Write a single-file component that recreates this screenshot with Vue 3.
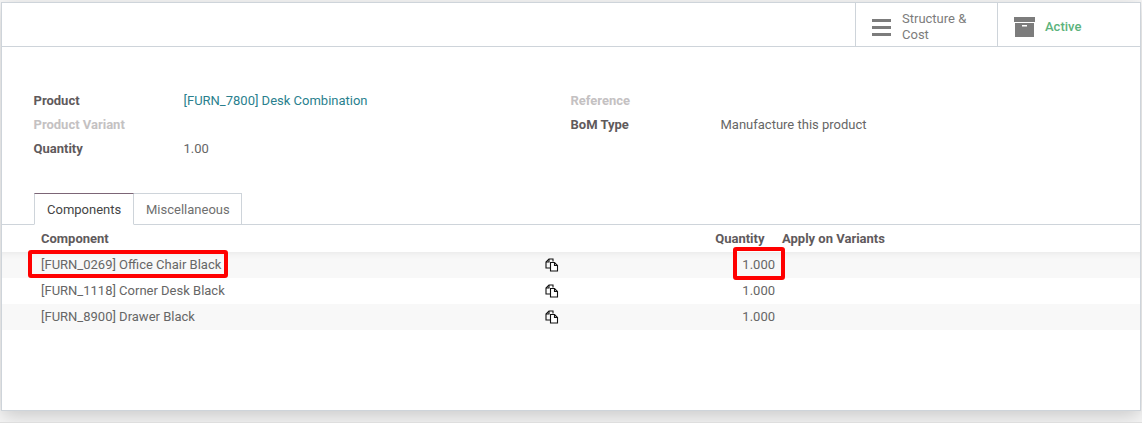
<script setup>
const leftFields = [
  { label: 'Product', value: '[FURN_7800] Desk Combination', link: true },
  { label: 'Product Variant', value: '', muted: true },
  { label: 'Quantity', value: '1.00' },
]
const rightFields = [
  { label: 'Reference', value: '', muted: true },
  { label: 'BoM Type', value: 'Manufacture this product' },
]
const rows = [
  { name: '[FURN_0269] Office Chair Black', qty: '1.000' },
  { name: '[FURN_1118] Corner Desk Black', qty: '1.000' },
  { name: '[FURN_8900] Drawer Black', qty: '1.000' },
]
</script>

<template>
  <div class="page">
    <div class="backdrop">
      <div class="sheet">
        <div class="topbar">
          <div class="stat stat-structure">
            <svg class="icon-bars" width="20" height="17" viewBox="0 0 20 17">
              <rect x="0" y="0" width="19" height="3" fill="#7c7c7c" />
              <rect x="0" y="7" width="19" height="3" fill="#7c7c7c" />
              <rect x="0" y="14" width="19" height="3" fill="#7c7c7c" />
            </svg>
            <span class="stat-text">Structure &amp;<br />Cost</span>
          </div>
          <div class="stat stat-active">
            <svg class="icon-box" width="21" height="20" viewBox="0 0 21 20">
              <rect x="0" y="0" width="21" height="5" fill="#7c7c7c" />
              <rect x="1" y="6" width="19" height="14" fill="#7c7c7c" />
              <rect x="8" y="8" width="5" height="1.5" fill="#fff" />
            </svg>
            <span class="active-text">Active</span>
          </div>
        </div>

        <div class="fields">
          <div class="field-col">
            <div v-for="f in leftFields" :key="f.label" class="field">
              <span class="label" :class="{ muted: f.muted }">{{ f.label }}</span>
              <span class="value" :class="{ link: f.link }">{{ f.value }}</span>
            </div>
          </div>
          <div class="field-col">
            <div v-for="f in rightFields" :key="f.label" class="field">
              <span class="label" :class="{ muted: f.muted }">{{ f.label }}</span>
              <span class="value">{{ f.value }}</span>
            </div>
          </div>
        </div>

        <div class="tabs">
          <div class="tab tab-active">Components</div>
          <div class="tab tab-misc">Miscellaneous</div>
        </div>

        <div class="table">
          <div class="row head">
            <span class="c-name">Component</span>
            <span class="c-icon"></span>
            <span class="c-qty head-qty">Quantity</span>
            <span class="c-var">Apply on Variants</span>
          </div>
          <div v-for="r in rows" :key="r.name" class="row body-row">
            <span class="c-name">{{ r.name }}</span>
            <span class="c-icon">
              <svg width="14" height="14" viewBox="0 0 14 14" fill="none" stroke="#111" stroke-width="1.1">
                <path d="M8 3.5V1H4L1 4v6h4" />
                <path d="M4 1v3H1" />
                <path d="M5.5 4.5h4l3 3v5.5h-7z" fill="#fff" />
                <path d="M9.5 4.5v3h3" />
              </svg>
            </span>
            <span class="c-qty">{{ r.qty }}</span>
            <span class="c-var"></span>
          </div>
        </div>

        <div class="mark mark-name"></div>
        <div class="mark mark-qty"></div>
      </div>
    </div>
  </div>
</template>

<style scoped>
.page {
  width: 1142px;
  height: 440px;
  background: #fff;
  font-family: Roboto, "Liberation Sans", sans-serif;
  font-size: 13px;
  color: #666;
  overflow: hidden;
}
.backdrop {
  height: 423px;
  box-sizing: border-box;
  padding: 2px 0 0 1px;
  background: #f8f8f8;
  border-bottom: 1px solid #dedede;
  overflow: hidden;
}
.sheet {
  position: relative;
  width: 1140px;
  height: 409px;
  box-sizing: border-box;
  background: #fff;
  border: 1px solid #ced4da;
  box-shadow: 0 5px 20px rgba(0, 0, 0, 0.2);
}
.topbar {
  display: flex;
  justify-content: flex-end;
  height: 43px;
  border-bottom: 1px solid #ced4da;
}
.stat {
  display: flex;
  align-items: center;
  box-sizing: border-box;
  height: 43px;
  padding-top: 5px;
  border-left: 1px solid #ced4da;
  color: #7c7c7c;
  line-height: 16px;
}
.stat-structure {
  width: 142px;
  padding-left: 16px;
  gap: 10px;
}
.stat-active {
  width: 143px;
  padding-left: 16px;
  gap: 10px;
}
.active-text {
  color: #5cb37c;
  font-weight: 500;
}
.fields {
  display: flex;
  padding: 41px 0 0 31.5px;
  height: 146px;
  box-sizing: border-box;
}
.field-col {
  width: 537px;
}
.field {
  display: flex;
  height: 24px;
  align-items: center;
}
.label {
  width: 150px;
  font-weight: 700;
  color: #5f5a5c;
}
.label.muted {
  color: #c4c1c2;
}
.link {
  color: #2a7f8e;
}
.tabs {
  display: flex;
  height: 31px;
  padding-left: 32px;
  border-bottom: 1px solid #ced4da;
  box-sizing: content-box;
}
.tab {
  box-sizing: border-box;
  height: 32px;
  padding: 0 12px;
  line-height: 32px;
  border: 1px solid #ced4da;
  border-left: 0;
  color: #6f6f6f;
}
.tab-misc {
  padding-right: 11px;
}
.tab-active {
  width: 100px;
  border-left: 1px solid #ced4da;
  border-top-color: #7c6576;
  border-bottom-color: #fff;
  color: #444;
}
.row {
  display: flex;
  align-items: center;
  height: 26px;
}
.row.head {
  height: 27px;
  font-weight: 700;
  color: #5f5a5c;
}
.body-row:nth-child(even) {
  background: #f8f8f8;
}
.body-row:nth-child(2) {
  box-shadow: inset 0 8px 6px -6px rgba(0, 0, 0, 0.06);
}
.body-row .c-name,
.body-row .c-qty {
  position: relative;
  top: -0.5px;
}
.c-name {
  width: 510px;
  padding-left: 39px;
  box-sizing: border-box;
}
.c-icon {
  width: 29px;
  margin-left: 33px;
  display: flex;
  align-items: center;
  box-sizing: border-box;
}
.c-qty {
  width: 201px;
  text-align: right;
  box-sizing: border-box;
}
.head-qty {
  width: 190.5px;
}
.c-var {
  margin-left: 17.5px;
}
.mark {
  position: absolute;
  box-sizing: border-box;
  border: 4px solid #f00;
  border-radius: 3px;
}
.mark-name {
  left: 26px;
  top: 247px;
  width: 200px;
  height: 28px;
}
.mark-qty {
  left: 731px;
  top: 244px;
  width: 52px;
  height: 33px;
}
</style>
